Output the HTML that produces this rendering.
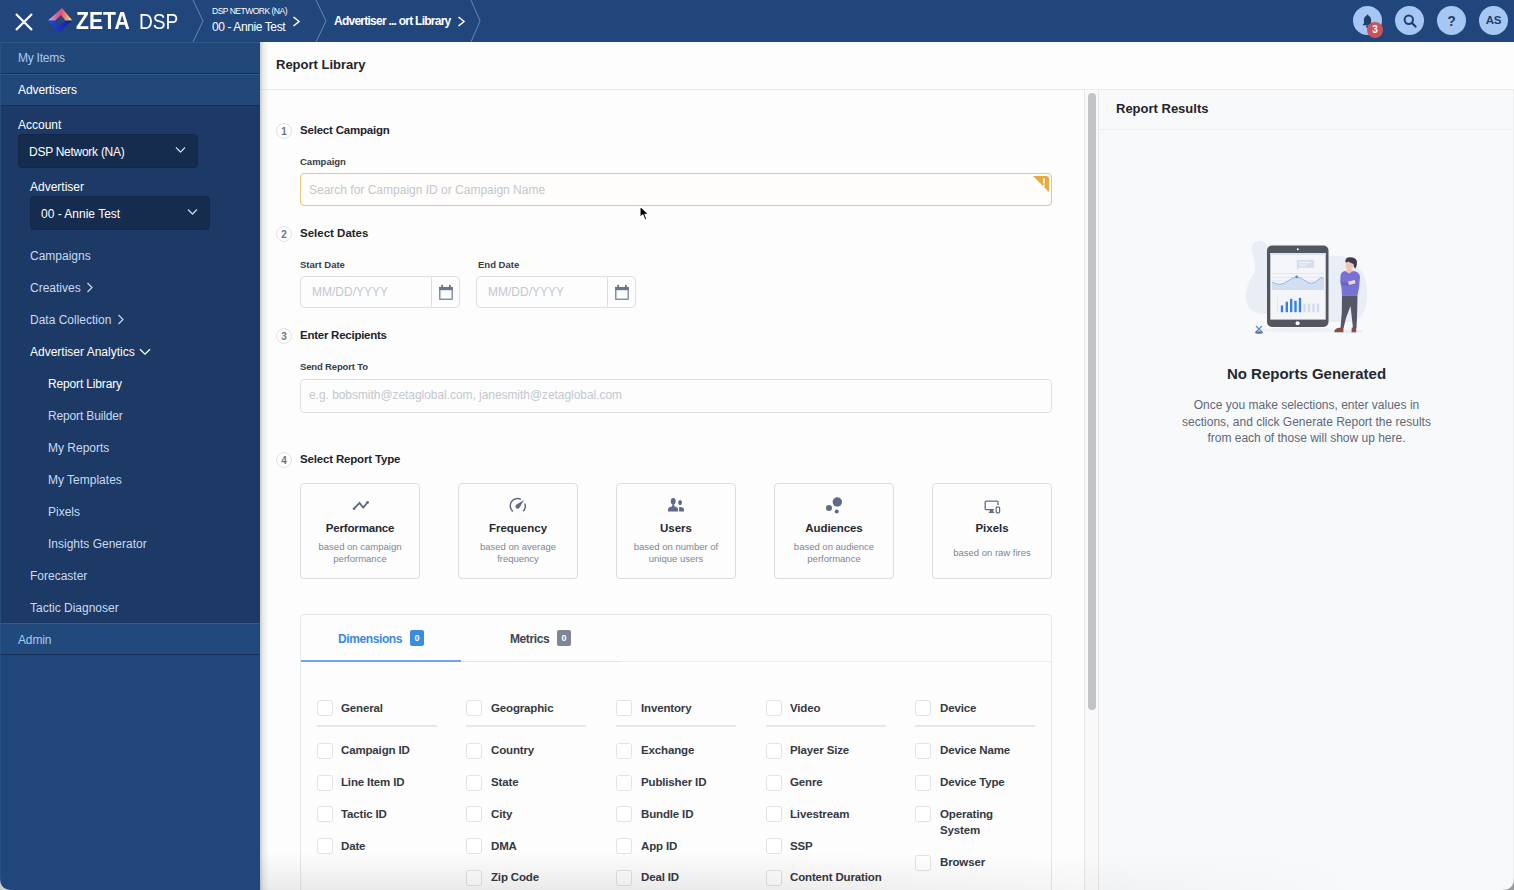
<!DOCTYPE html>
<html><head><meta charset="utf-8">
<style>
*{box-sizing:border-box;margin:0;padding:0}
html,body{width:1514px;height:890px;overflow:hidden;background:#fdfdfd;font-family:"Liberation Sans",sans-serif;position:relative}
.a{position:absolute;white-space:nowrap}
#hdr{position:absolute;left:0;top:0;width:1514px;height:42px;background:#21467b}
#side{position:absolute;left:0;top:42px;width:260px;height:848px;background:#20467b}
.w{color:#fff}
.b{font-weight:bold}
.nav{color:#c9d9f1;font-size:12px}
.circ{position:absolute;top:6px;width:29px;height:29px;border-radius:50%;background:#a6c7f4}
#main{position:absolute;left:260px;top:42px;width:1254px;height:848px;background:#fdfdfd}
.h1{font-size:12.5px;font-weight:bold;color:#1f232b}
.lbl{font-size:10px;font-weight:bold;color:#363c48}
.num{position:absolute;width:16px;height:16px;border:1px solid #e1e4e8;border-radius:50%;font-size:10px;font-weight:bold;color:#6f7684;text-align:center;line-height:15px}
.inp{position:absolute;border:1px solid #dcdfe4;border-radius:4px;background:#fdfdfd}
.ph{color:#c3c7ce;font-size:11.5px}
.card{position:absolute;top:483px;width:120px;height:96px;border:1px solid #d9dce2;border-radius:4px;background:#fdfdfd;text-align:center}
.ct{position:absolute;left:0;right:0;top:37px;font-size:11.5px;font-weight:bold;color:#262a32}
.cs{position:absolute;left:0;right:0;top:57px;font-size:9.5px;color:#7e8594;line-height:12px}
.cb{position:absolute;width:16px;height:16px;border:1px solid #e1e3e8;border-radius:3px;background:#fff}
.ck{font-size:11.5px;font-weight:bold;color:#343944;letter-spacing:-0.15px}
</style></head><body>

<div id="hdr">
 <svg class="a" style="left:15px;top:13px" width="18" height="18" viewBox="0 0 18 18"><path d="M1 1L17 17M17 1L1 17" stroke="#fff" stroke-width="2.2" fill="none"/></svg>
 <svg class="a" style="left:42px;top:4px" width="36" height="34" viewBox="0 0 36 34">
  <defs>
   <linearGradient id="lg1" x1="0" y1="0.5" x2="1" y2="0.5"><stop offset="0" stop-color="#b4c4ee"/><stop offset="0.35" stop-color="#d8609a"/><stop offset="0.55" stop-color="#e0507a"/><stop offset="0.85" stop-color="#f4b466"/><stop offset="1" stop-color="#fff4e0"/></linearGradient>
   <linearGradient id="lg2" x1="0" y1="0" x2="1" y2="0"><stop offset="0" stop-color="#2a4ad0"/><stop offset="1" stop-color="#0a1aa8"/></linearGradient>
  </defs>
  <path d="M6 16.6 L20 4 L30.3 16.6 L23.7 17 L19 11 L12.5 17 Z" fill="url(#lg1)"/>
  <path d="M6 16.6 L30.3 16.6 L16.4 28.8 Z M12.5 16.6 L16.5 22.5 L23.7 16.6 Z" fill="url(#lg2)" fill-rule="evenodd"/>
 </svg>
 <div class="a b w" style="left:76px;top:8px;font-size:23.5px;transform:scaleX(0.9);transform-origin:0 0">ZETA</div>
 <div class="a w" style="left:139px;top:9px;font-size:22px;transform:scaleX(0.87);transform-origin:0 0">DSP</div>
 <svg class="a" style="left:192px;top:0" width="12" height="42"><path d="M1 0L11 21L1 42" stroke="#6a86ae" stroke-width="1" fill="none"/></svg>
 <div class="a w" style="left:212px;top:6px;font-size:8.5px;letter-spacing:-0.5px">DSP NETWORK (NA)</div>
 <div class="a w" style="left:212px;top:20px;font-size:12px;letter-spacing:-0.4px">00 - Annie Test</div>
 <svg class="a" style="left:292px;top:16px" width="9" height="11"><path d="M1.5 1L7 5.5L1.5 10" stroke="#fff" stroke-width="1.5" fill="none"/></svg>
 <svg class="a" style="left:315px;top:0" width="12" height="42"><path d="M1 0L11 21L1 42" stroke="#6a86ae" stroke-width="1" fill="none"/></svg>
 <div class="a b w" style="left:334px;top:14px;font-size:12px;letter-spacing:-0.75px">Advertiser ... ort Library</div>
 <svg class="a" style="left:457px;top:16px" width="9" height="11"><path d="M1.5 1L7 5.5L1.5 10" stroke="#fff" stroke-width="1.5" fill="none"/></svg>
 <svg class="a" style="left:470px;top:0" width="12" height="42"><path d="M1 0L10 21L1 42" stroke="#6a86ae" stroke-width="1" fill="none"/></svg>
 <div class="circ" style="left:1353px"><svg class="a" style="left:8px;top:8px" width="13" height="15" viewBox="0 0 13 15"><circle cx="6.5" cy="1.6" r="1" fill="#1f3f6b"/><path d="M6.5 1.8c-2.4 0-3.6 1.8-3.6 4v3.6L1.3 11.3h10.4L10.1 9.4V5.8c0-2.2-1.2-4-3.6-4z" fill="#1f3f6b"/><circle cx="6.5" cy="12.6" r="1.4" fill="#1f3f6b"/></svg></div>
 <div class="a" style="left:1367px;top:22px;width:16px;height:16px;border-radius:50%;background:#c9535b;color:#fff;font-size:10px;font-weight:bold;text-align:center;line-height:16px">3</div>
 <div class="circ" style="left:1395px"><svg class="a" style="left:8px;top:8px" width="14" height="14" viewBox="0 0 14 14"><circle cx="5.8" cy="5.8" r="4.2" stroke="#1f3f6b" stroke-width="2" fill="none"/><path d="M8.8 8.8L12.5 12.5" stroke="#1f3f6b" stroke-width="2.2" stroke-linecap="round"/></svg></div>
 <div class="circ" style="left:1437px"><div class="a" style="left:0;width:29px;top:7px;text-align:center;font-size:14px;font-weight:bold;color:#1f3f6b">?</div></div>
 <div class="circ" style="left:1479px"><div class="a" style="left:0;width:29px;top:8px;text-align:center;font-size:11.5px;font-weight:bold;color:#1f3f6b;letter-spacing:-0.3px">AS</div></div>
</div>
<div id="side">
 <div class="a" style="left:0;top:0;width:260px;height:32px;background:#22487a;border-top:1px solid #2b5b8a;border-bottom:1px solid #163056"></div>
 <div class="a" style="left:0;top:32px;width:260px;height:32px;background:#22487a;border-top:1px solid #2d5b8b;border-bottom:1px solid #163056"></div>
 <div class="a" style="left:0;top:64px;width:260px;height:517px;background:#1c3a65"></div>
 <div class="a" style="left:0;top:581px;width:260px;height:32px;background:#22497b;border-top:1px solid #2d5b8b;border-bottom:1px solid #163056"></div>
 <div class="a" style="left:0;top:0;width:1px;height:848px;background:#2b5687;opacity:.6"></div>
 <div class="a" style="left:18px;top:9px;font-size:12px;color:#a9c8f1;letter-spacing:-0.25px">My Items</div>
 <div class="a w" style="left:18px;top:41px;font-size:12px;letter-spacing:-0.1px">Advertisers</div>
 <div class="a w" style="left:18px;top:76px;font-size:12px">Account</div>
 <div class="a" style="left:18px;top:92px;width:180px;height:34px;background:#162c4f;border:1px solid #13274a;border-radius:4px"></div>
 <div class="a w" style="left:29px;top:103px;font-size:12px;letter-spacing:-0.27px">DSP Network (NA)</div>
 <svg class="a" style="left:175px;top:104px" width="11" height="8"><path d="M1 1.5L5.5 6L10 1.5" stroke="#c9d5e6" stroke-width="1.3" fill="none"/></svg>
 <div class="a w" style="left:30px;top:138px;font-size:12px">Advertiser</div>
 <div class="a" style="left:30px;top:154px;width:180px;height:34px;background:#162c4f;border:1px solid #13274a;border-radius:4px"></div>
 <div class="a w" style="left:41px;top:165px;font-size:12px">00 - Annie Test</div>
 <svg class="a" style="left:187px;top:166px" width="11" height="8"><path d="M1 1.5L5.5 6L10 1.5" stroke="#c9d5e6" stroke-width="1.3" fill="none"/></svg>
 <div class="a nav" style="left:30px;top:207px">Campaigns</div>
 <div class="a nav" style="left:30px;top:239px">Creatives</div>
 <svg class="a" style="left:86px;top:240px" width="8" height="11"><path d="M1.5 1L6 5.5L1.5 10" stroke="#c9d9f1" stroke-width="1.2" fill="none"/></svg>
 <div class="a nav" style="left:30px;top:271px">Data Collection</div>
 <svg class="a" style="left:117px;top:272px" width="8" height="11"><path d="M1.5 1L6 5.5L1.5 10" stroke="#c9d9f1" stroke-width="1.2" fill="none"/></svg>
 <div class="a w" style="left:30px;top:303px;font-size:12px">Advertiser Analytics</div>
 <svg class="a" style="left:139px;top:306px" width="12" height="8"><path d="M1 1.2L6 6.2L11 1.2" stroke="#fff" stroke-width="1.3" fill="none"/></svg>
 <div class="a w" style="left:48px;top:335px;font-size:12px;letter-spacing:-0.15px">Report Library</div>
 <div class="a nav" style="left:48px;top:367px;letter-spacing:-0.15px">Report Builder</div>
 <div class="a nav" style="left:48px;top:399px">My Reports</div>
 <div class="a nav" style="left:48px;top:431px">My Templates</div>
 <div class="a nav" style="left:48px;top:463px">Pixels</div>
 <div class="a nav" style="left:48px;top:495px">Insights Generator</div>
 <div class="a nav" style="left:30px;top:527px">Forecaster</div>
 <div class="a nav" style="left:30px;top:559px">Tactic Diagnoser</div>
 <div class="a" style="left:18px;top:591px;font-size:12px;color:#a9c8f1;letter-spacing:-0.15px">Admin</div>
</div>
<div id="main">
 <div class="a h1" style="left:16px;top:15px;font-size:13px">Report Library</div>
 <div class="a" style="left:0;top:47px;width:1254px;height:1px;background:#ececef"></div>

 <!-- step 1 -->
 <div class="num" style="left:16px;top:81px">1</div>
 <div class="a h1" style="left:40px;top:82px;letter-spacing:-0.2px;font-size:11.5px">Select Campaign</div>
 <div class="a lbl" style="left:40px;top:114px;font-size:9.5px">Campaign</div>
 <div class="a" style="left:40px;top:131px;width:752px;height:33px;border:1.5px solid #efc47e;border-radius:4px;background:#fefdfb"></div>
 <svg class="a" style="left:773px;top:134px" width="16" height="16" viewBox="0 0 16 16"><path d="M0 0H13Q16 0 16 3V16Z" fill="#e8a93f"/><rect x="10" y="2.5" width="1.8" height="5" fill="#fff"/><rect x="10" y="8.7" width="1.8" height="1.8" fill="#fff"/></svg>
 <div class="a ph" style="left:49px;top:141px;font-size:12px">Search for Campaign ID or Campaign Name</div>
 <!-- step 2 -->
 <div class="num" style="left:16px;top:184px">2</div>
 <div class="a h1" style="left:40px;top:185px;font-size:11.5px">Select Dates</div>
 <div class="a lbl" style="left:40px;top:217px;font-size:9.5px">Start Date</div>
 <div class="a lbl" style="left:218px;top:217px;font-size:9.5px">End Date</div>
 <div class="inp" style="left:40px;top:234px;width:160px;height:32px"></div>
 <div class="a" style="left:171px;top:235px;width:1px;height:30px;background:#dcdfe4"></div>
 <div class="a ph" style="left:52px;top:243px;font-size:12px;letter-spacing:0px">MM/DD/YYYY</div>
 <div class="inp" style="left:216px;top:234px;width:160px;height:32px"></div>
 <div class="a" style="left:347px;top:235px;width:1px;height:30px;background:#dcdfe4"></div>
 <div class="a ph" style="left:228px;top:243px;font-size:12px;letter-spacing:0px">MM/DD/YYYY</div>
 <svg class="a" style="left:178px;top:241px" width="16" height="17" viewBox="0 0 16 17"><rect x="1.2" y="4" width="13.6" height="3.2" fill="#6b7690"/><rect x="1.8" y="4.5" width="12.4" height="11.7" stroke="#6b7690" stroke-width="1.2" fill="none"/><rect x="3.2" y="1.8" width="1.8" height="2.6" fill="#6b7690"/><rect x="11" y="1.8" width="1.8" height="2.6" fill="#6b7690"/></svg>
 <svg class="a" style="left:354px;top:241px" width="16" height="17" viewBox="0 0 16 17"><rect x="1.2" y="4" width="13.6" height="3.2" fill="#6b7690"/><rect x="1.8" y="4.5" width="12.4" height="11.7" stroke="#6b7690" stroke-width="1.2" fill="none"/><rect x="3.2" y="1.8" width="1.8" height="2.6" fill="#6b7690"/><rect x="11" y="1.8" width="1.8" height="2.6" fill="#6b7690"/></svg>
 <!-- step 3 -->
 <div class="num" style="left:16px;top:286px">3</div>
 <div class="a h1" style="left:40px;top:287px;font-size:11.5px;letter-spacing:-0.25px">Enter Recipients</div>
 <div class="a lbl" style="left:40px;top:319px;font-size:9.5px;letter-spacing:-0.15px">Send Report To</div>
 <div class="inp" style="left:40px;top:337px;width:752px;height:34px"></div>
 <div class="a ph" style="left:49px;top:346px;font-size:11.9px">e.g. bobsmith@zetaglobal.com, janesmith@zetaglobal.com</div>
 <!-- step 4 -->
 <div class="num" style="left:16px;top:410px">4</div>
 <div class="a h1" style="left:40px;top:411px;font-size:11.5px;letter-spacing:-0.17px">Select Report Type</div>
 <!-- cards -->
 <div class="card" style="left:40px;top:441px"><svg class="a" style="left:51px;top:15px" width="18" height="12" viewBox="0 0 18 12"><path d="M2 9.7L7.5 3.9L11.2 8.5L15.5 3.5" stroke="#5f6b86" stroke-width="1.9" fill="none" stroke-linejoin="miter"/><circle cx="2" cy="9.7" r="1.3" fill="#5f6b86"/><circle cx="15.6" cy="3.4" r="1.4" fill="#5f6b86"/></svg><div class="ct" style="top:38px;letter-spacing:-0.15px">Performance</div><div class="cs" style="top:57px">based on campaign<br>performance</div></div>
 <div class="card" style="left:198px;top:441px"><svg class="a" style="left:50px;top:12px" width="20" height="20" viewBox="0 0 20 20"><path d="M3.9 15.3A7.2 7.2 0 0 1 11.9 3.4" stroke="#5f6b86" stroke-width="1.5" fill="none"/><path d="M15.7 7.6A7.2 7.2 0 0 1 14.1 15.3" stroke="#5f6b86" stroke-width="1.5" fill="none"/><path d="M15 4.1L10.3 12Q8.6 13.3 7 12Q5.7 10.3 7.2 8.8Z" fill="#5f6b86"/></svg><div class="ct" style="top:38px;letter-spacing:0px">Frequency</div><div class="cs" style="top:57px">based on average<br>frequency</div></div>
 <div class="card" style="left:356px;top:441px"><svg class="a" style="left:50px;top:12px" width="20" height="20" viewBox="0 0 20 20"><ellipse cx="6.2" cy="5.2" rx="2.4" ry="3.2" fill="#5f6b86"/><path d="M1 15.6V13Q1.3 11.3 4 10.8L5.2 10.3V8.3H7.2V10.3L8.4 10.8Q11 11.3 11.1 13V15.6Z" fill="#5f6b86"/><ellipse cx="13.1" cy="6.6" rx="1.9" ry="2.6" fill="#5f6b86"/><path d="M12.1 15.6V11.3L12.6 11H13.7Q16.8 11.4 17 13.2V15.6Z" fill="#5f6b86"/></svg><div class="ct" style="top:38px;letter-spacing:0px">Users</div><div class="cs" style="top:57px">based on number of<br>unique users</div></div>
 <div class="card" style="left:514px;top:441px"><svg class="a" style="left:50px;top:12px" width="20" height="20" viewBox="0 0 20 20"><circle cx="12.3" cy="6" r="4.7" fill="#5f6b86"/><circle cx="4" cy="11.9" r="3" fill="#5f6b86"/><circle cx="11.7" cy="15.4" r="2" fill="#5f6b86"/></svg><div class="ct" style="top:38px;letter-spacing:-0.1px">Audiences</div><div class="cs" style="top:57px">based on audience<br>performance</div></div>
 <div class="card" style="left:672px;top:441px"><svg class="a" style="left:50px;top:12px" width="20" height="20" viewBox="0 0 20 20"><path d="M15 9V6.2Q15 5.2 14 5.2H3.2Q2.2 5.2 2.2 6.2V12.6Q2.2 13.6 3.2 13.6H11" stroke="#5f6b86" stroke-width="1.3" fill="none"/><rect x="7" y="13.5" width="3" height="2.5" fill="#5f6b86"/><rect x="5.8" y="15.6" width="5.4" height="1.4" fill="#5f6b86"/><rect x="13.2" y="11.1" width="3.4" height="5.7" rx="0.8" stroke="#5f6b86" stroke-width="1.2" fill="none"/></svg><div class="ct" style="top:38px;letter-spacing:0px">Pixels</div><div class="cs" style="top:63px">based on raw fires</div></div>
 <div class="a" style="left:40px;top:572px;width:752px;height:300px;border:1px solid #e6e8ec;border-radius:4px;background:#fdfdfd"></div>
 <div class="a" style="left:41px;top:619px;width:750px;height:1px;background:#eceef1"></div>
 <div class="a" style="left:41px;top:618px;width:160px;height:2px;background:#6fa5e6"></div>
 <div class="a" style="left:201px;top:619px;width:160px;height:1px;background:#e2e4e8"></div>
 <div class="a" style="left:78px;top:590px;font-size:12px;font-weight:bold;color:#3a88e4;letter-spacing:-0.4px">Dimensions</div>
 <div class="a" style="left:150px;top:588px;width:14px;height:16px;background:#3a8ce3;border-radius:2px;color:#fff;font-size:9px;font-weight:bold;text-align:center;line-height:16px">0</div>
 <div class="a" style="left:250px;top:590px;font-size:12px;font-weight:bold;color:#3e4553;letter-spacing:-0.4px">Metrics</div>
 <div class="a" style="left:297px;top:588px;width:14px;height:16px;background:#7e8594;border-radius:2px;color:#fff;font-size:9px;font-weight:bold;text-align:center;line-height:16px">0</div>
 <div class="cb" style="left:57px;top:658px"></div><div class="a ck" style="left:81px;top:658px;line-height:16px">General</div>
 <div class="cb" style="left:57px;top:701px"></div><div class="a ck" style="left:81px;top:700px;line-height:16px">Campaign ID</div>
 <div class="cb" style="left:57px;top:733px"></div><div class="a ck" style="left:81px;top:732px;line-height:16px">Line Item ID</div>
 <div class="cb" style="left:57px;top:764px"></div><div class="a ck" style="left:81px;top:764px;line-height:16px">Tactic ID</div>
 <div class="cb" style="left:57px;top:796px"></div><div class="a ck" style="left:81px;top:796px;line-height:16px">Date</div>
 <div class="a" style="left:57px;top:683px;width:120px;height:2px;background:#e5e7eb"></div>
 <div class="cb" style="left:206px;top:658px"></div><div class="a ck" style="left:231px;top:658px;line-height:16px">Geographic</div>
 <div class="cb" style="left:206px;top:701px"></div><div class="a ck" style="left:231px;top:700px;line-height:16px">Country</div>
 <div class="cb" style="left:206px;top:733px"></div><div class="a ck" style="left:231px;top:732px;line-height:16px">State</div>
 <div class="cb" style="left:206px;top:764px"></div><div class="a ck" style="left:231px;top:764px;line-height:16px">City</div>
 <div class="cb" style="left:206px;top:796px"></div><div class="a ck" style="left:231px;top:796px;line-height:16px">DMA</div>
 <div class="cb" style="left:206px;top:828px"></div><div class="a ck" style="left:231px;top:827px;line-height:16px">Zip Code</div>
 <div class="a" style="left:206px;top:683px;width:120px;height:2px;background:#e5e7eb"></div>
 <div class="cb" style="left:356px;top:658px"></div><div class="a ck" style="left:381px;top:658px;line-height:16px">Inventory</div>
 <div class="cb" style="left:356px;top:701px"></div><div class="a ck" style="left:381px;top:700px;line-height:16px">Exchange</div>
 <div class="cb" style="left:356px;top:733px"></div><div class="a ck" style="left:381px;top:732px;line-height:16px">Publisher ID</div>
 <div class="cb" style="left:356px;top:764px"></div><div class="a ck" style="left:381px;top:764px;line-height:16px">Bundle ID</div>
 <div class="cb" style="left:356px;top:796px"></div><div class="a ck" style="left:381px;top:796px;line-height:16px">App ID</div>
 <div class="cb" style="left:356px;top:828px"></div><div class="a ck" style="left:381px;top:827px;line-height:16px">Deal ID</div>
 <div class="a" style="left:356px;top:683px;width:120px;height:2px;background:#e5e7eb"></div>
 <div class="cb" style="left:506px;top:658px"></div><div class="a ck" style="left:530px;top:658px;line-height:16px">Video</div>
 <div class="cb" style="left:506px;top:701px"></div><div class="a ck" style="left:530px;top:700px;line-height:16px">Player Size</div>
 <div class="cb" style="left:506px;top:733px"></div><div class="a ck" style="left:530px;top:732px;line-height:16px">Genre</div>
 <div class="cb" style="left:506px;top:764px"></div><div class="a ck" style="left:530px;top:764px;line-height:16px">Livestream</div>
 <div class="cb" style="left:506px;top:796px"></div><div class="a ck" style="left:530px;top:796px;line-height:16px">SSP</div>
 <div class="cb" style="left:506px;top:828px"></div><div class="a ck" style="left:530px;top:827px;line-height:16px">Content Duration</div>
 <div class="a" style="left:506px;top:683px;width:120px;height:2px;background:#e5e7eb"></div>
 <div class="cb" style="left:655px;top:658px"></div><div class="a ck" style="left:680px;top:658px;line-height:16px">Device</div>
 <div class="cb" style="left:655px;top:701px"></div><div class="a ck" style="left:680px;top:700px;line-height:16px">Device Name</div>
 <div class="cb" style="left:655px;top:733px"></div><div class="a ck" style="left:680px;top:732px;line-height:16px">Device Type</div>
 <div class="cb" style="left:655px;top:764px"></div><div class="a ck" style="left:680px;top:764px;line-height:16px">Operating<br>System</div>
 <div class="cb" style="left:655px;top:813px"></div><div class="a ck" style="left:680px;top:812px;line-height:16px">Browser</div>
 <div class="a" style="left:655px;top:683px;width:120px;height:2px;background:#e5e7eb"></div>
 <!-- scrollbar -->
 <div class="a" style="left:824px;top:48px;width:15px;height:800px;background:#f9f9fa;border-left:1px solid #e6e7ea;border-right:1px solid #e6e7ea"></div>
 <div class="a" style="left:828px;top:51px;width:8px;height:617px;border-radius:4px;background:#c2c3c6"></div>
 <!-- right panel -->
 <div class="a" style="left:839px;top:48px;width:415px;height:800px;background:#f8f9fb"></div>
 <div class="a" style="left:839px;top:87px;width:415px;height:1px;background:#eceef1"></div>
 <div class="a" style="left:1253px;top:48px;width:1px;height:800px;background:#eceef1"></div>
 <div class="a h1" style="left:856px;top:59px;font-size:13px">Report Results</div>
 <svg class="a" style="left:970px;top:188px" width="160" height="110" viewBox="1230 230 160 110">
  <path d="M1262 241Q1250 240 1252 252Q1256 262 1255 272Q1244 288 1246 300Q1248 312 1262 314L1268 314L1268 246Z" fill="#e8edf6"/>
  <path d="M1328 256Q1345 254 1352 262Q1368 272 1367 296Q1366 318 1352 322L1328 322Z" fill="#e8edf6"/>
  <ellipse cx="1300" cy="330" rx="40" ry="2.5" fill="#edf1f7"/>
  <rect x="1267" y="245.5" width="61.5" height="81.5" rx="5" fill="#54565f"/>
  <rect x="1270.3" y="253" width="55.4" height="66.6" fill="#f3f5f9"/>
  <rect x="1270.3" y="253" width="55.4" height="2" fill="#dbe6f4"/>
  <circle cx="1297.8" cy="249.3" r="1" fill="#fff"/>
  <circle cx="1297.6" cy="323.2" r="2" fill="#fff"/>
  <path d="M1296.7 259.7H1314V267.7H1299.5L1297 270Z" fill="#d4def0"/>
  <rect x="1299" y="262" width="12" height="1.2" fill="#eef2f8"/><rect x="1299" y="264.5" width="8" height="1.2" fill="#eef2f8"/>
  <rect x="1272" y="273" width="52" height="0.8" fill="#dfe3ea"/>
  <rect x="1272" y="276.8" width="52" height="0.8" fill="#dfe3ea"/>
  <rect x="1272" y="280.5" width="52" height="0.8" fill="#dfe3ea"/>
  <path d="M1272 282Q1280 287 1288 281Q1296 274 1304 280Q1312 287 1319 279Q1322 276 1324 279V290H1272Z" fill="#d3dff1"/>
  <path d="M1272 282Q1280 287 1288 281Q1296 274 1304 280Q1312 287 1319 279Q1322 276 1324 279" stroke="#8bb2e6" stroke-width="0.9" fill="none"/>
  <circle cx="1296.7" cy="276.8" r="1.3" fill="#3c82de"/>
  <rect x="1277" y="297" width="0.8" height="15" fill="#dfe3ea"/>
  <rect x="1280.8" y="305.4" width="2.4" height="6.8" fill="#3a80de"/>
  <rect x="1285.6" y="301.7" width="2.4" height="10.5" fill="#3a80de"/>
  <rect x="1290" y="298.9" width="2.4" height="13.3" fill="#3a80de"/>
  <rect x="1294.3" y="300.7" width="2.4" height="11.5" fill="#3a80de"/>
  <rect x="1298.8" y="297.9" width="2.4" height="14.3" fill="#3a80de"/>
  <rect x="1303.3" y="303.6" width="2.4" height="8.6" fill="#d3dcee"/>
  <rect x="1307.8" y="303.6" width="2.4" height="8.6" fill="#d3dcee"/>
  <rect x="1312.3" y="303.6" width="2.4" height="8.6" fill="#d3dcee"/>
  <rect x="1316.8" y="303.6" width="2.4" height="8.6" fill="#d3dcee"/>
  <ellipse cx="1349" cy="331.5" rx="14" ry="1.8" fill="#e8edf5"/>
  <path d="M1346 270H1352.5L1353 275H1346Z" fill="#efc4b3"/>
  <path d="M1340.5 276Q1341 271.5 1345 271L1349 273.5L1353 271Q1359.5 271.5 1360 277L1359 288L1357.5 295.5H1342L1341.5 288Q1339.5 282 1340.5 276Z" fill="#7771d6"/>
  <path d="M1341 282Q1346 284 1356 280L1357 284Q1347 287 1342 285Z" fill="#6862c4"/>
  <path d="M1348 281.5L1355 280L1355.5 283.5L1349 285Z" fill="#f1d3cc"/>
  <path d="M1342 295.5H1357.5L1357.2 312L1356.5 328.3H1353L1350.5 306L1346 318L1343.5 328.3H1340.5L1341.8 312Z" fill="#555769"/>
  <path d="M1334.2 332.2Q1334.5 328.5 1339 327.8L1343.4 327.5V332.2Z" fill="#8a4e3d"/>
  <path d="M1351.8 327.5H1356.2V332.2H1351.5Z" fill="#8a4e3d"/>
  <ellipse cx="1349.4" cy="265.8" rx="3.6" ry="4.9" fill="#efc4b3"/>
  <path d="M1345.3 262Q1345 257.5 1350 257.3Q1355 257 1356.9 261Q1357.5 265 1355.5 268.4Q1353.5 268 1353.5 264Q1351 263 1348.5 261.5Q1346.5 263 1345.3 262Z" fill="#3f3b4a"/>
  <path d="M1256 326L1262 332M1262 326L1256 332" stroke="#4a8fe4" stroke-width="1.3"/>
  <ellipse cx="1259" cy="332.5" rx="4" ry="1.3" fill="#6e7585"/>
 </svg>
 <div class="a" style="left:839px;top:323px;width:415px;text-align:center;font-size:15px;font-weight:bold;color:#25292f">No Reports Generated</div>
 <div class="a" style="left:839px;top:355px;width:415px;text-align:center;font-size:12px;line-height:16.5px;color:#5f6877;white-space:normal">Once you make selections, enter values in<br>sections, and click Generate Report the results<br>from each of those will show up here.</div>
</div>

<div class="a" style="left:260px;top:42px;width:9px;height:848px;background:linear-gradient(to right,rgba(0,0,0,.2),rgba(0,0,0,.07) 35%,rgba(0,0,0,0))"></div>
<div class="a" style="left:260px;top:852px;width:1100px;height:38px;background:linear-gradient(to bottom,rgba(0,0,0,0),rgba(0,0,0,.075));-webkit-mask-image:linear-gradient(to right,#000 0,#000 40%,rgba(0,0,0,0) 100%)"></div>
<svg class="a" style="left:638px;top:204px" width="14" height="20" viewBox="0 0 14 20"><path d="M2 2V13.5L4.8 10.8L7 16L9 15.2L6.9 10.2H10.6Z" fill="#000" stroke="#fff" stroke-width="1.1" stroke-linejoin="round"/></svg>
<svg class="a" style="left:0;top:878px" width="12" height="12"><path d="M0 0V12H12Q0 12 0 0Z" fill="#c9cbcf"/></svg>
<svg class="a" style="left:1502px;top:878px" width="12" height="12"><path d="M12 0V12H0Q12 12 12 0Z" fill="#9a9ca0"/></svg>
</body></html>
